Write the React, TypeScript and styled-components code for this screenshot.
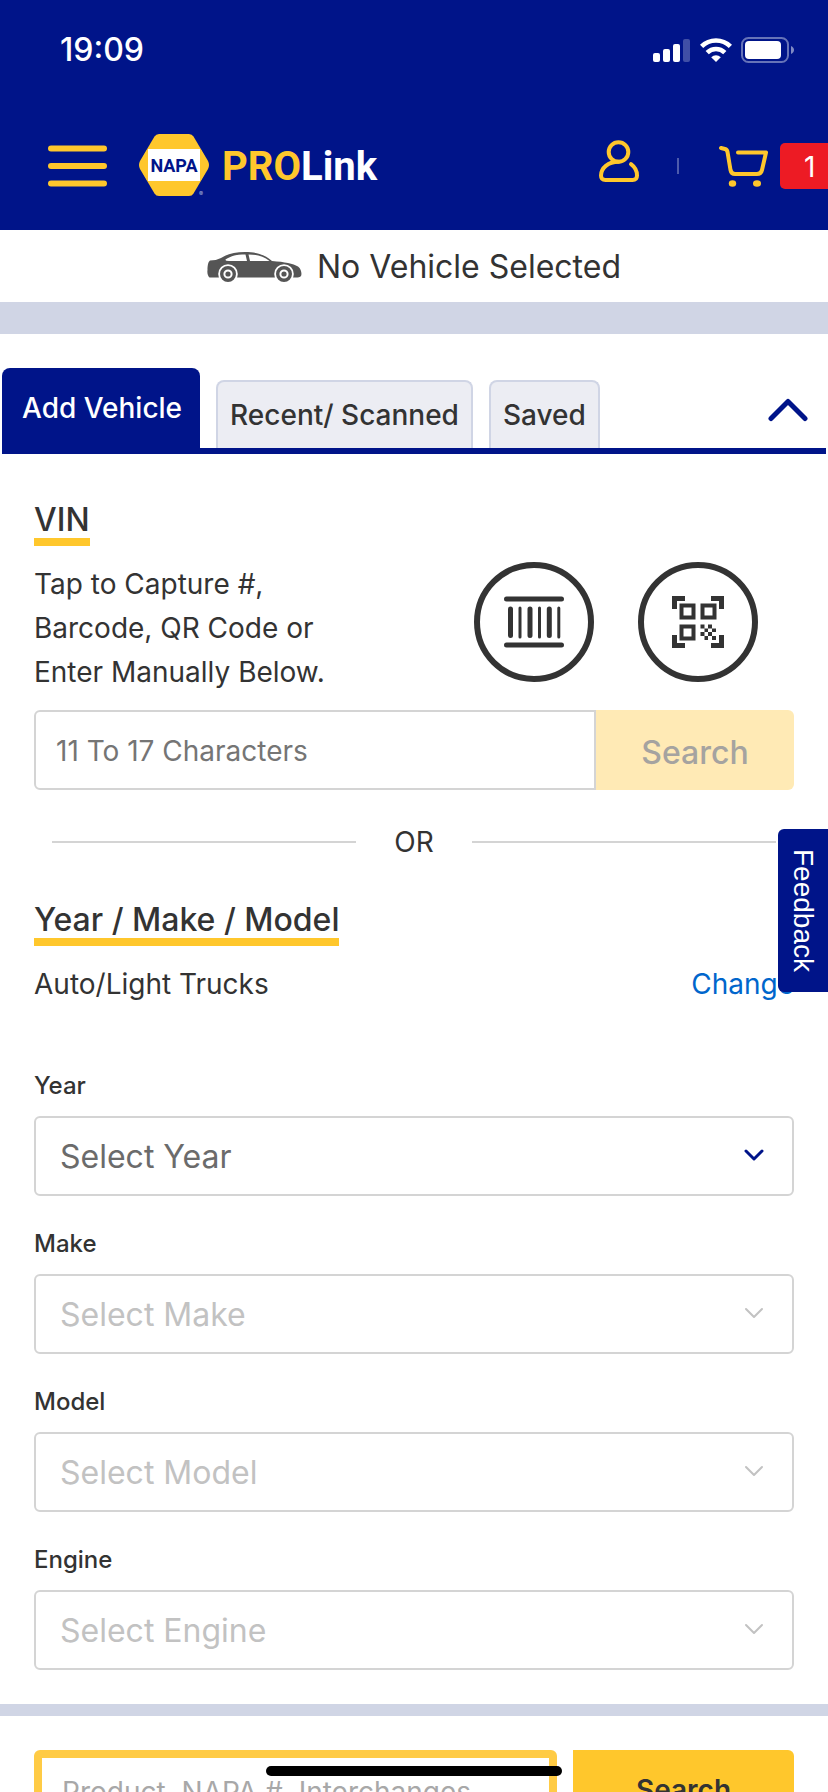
import React, { useState } from "react";
import styled, { createGlobalStyle } from "styled-components";

const navy = "#001489";
const gold = "#ffc72c";
const ink = "#333333";
const mist = "#d0d5e5";
const line = "#d4d4d4";

const GlobalStyle = createGlobalStyle`
  *, *::before, *::after { box-sizing: border-box; }
  html, body { margin: 0; padding: 0; background: #fff; }
  body, button, input, select {
    font-family: Inter, "Liberation Sans", sans-serif;
    color: ${ink};
  }
  button { border: 0; padding: 0; background: none; cursor: pointer; }
  svg { display: block; flex: none; }
`;

const Screen = styled.div`
  position: relative;
  height: 100vh;
  overflow-x: hidden;
  overflow-y: auto;
  scrollbar-width: none;
`;

const TopArea = styled.header`
  background: ${navy};
  color: #fff;
`;

const StatusBar = styled.div`
  display: flex;
  align-items: center;
  justify-content: space-between;
  height: 100px;
  padding: 0 34px 0 60px;
`;

const Clock = styled.time`
  font-size: 32px;
  font-weight: 500;
  line-height: 40px;
`;

const StatusIcons = styled.div`
  display: flex;
  align-items: center;
  gap: 9px;
`;

const NavBar = styled.nav`
  display: flex;
  align-items: center;
  height: 130px;
  padding: 2px 0 0 48px;
`;

const MenuButton = styled.button`
  margin-right: 32px;
`;

const Brand = styled.a`
  display: flex;
  align-items: center;
  text-decoration: none;
`;

const NavActions = styled.div`
  display: flex;
  align-items: center;
  margin-left: auto;
`;

const UserButton = styled.button`
  margin-bottom: 10px;
`;

const NavDivider = styled.span`
  width: 2px;
  height: 16px;
  margin: 0 40px 0 38px;
  background: #4d5bac;
`;

const CartButton = styled.button`
  display: flex;
  align-items: center;
  gap: 12px;
`;

const CartCount = styled.span`
  width: 48px;
  height: 46px;
  padding-left: 24px;
  border-radius: 5px 0 0 5px;
  background: #ed1b24;
  color: #fff;
  font-size: 28px;
  line-height: 48px;
  text-align: left;
`;

const VehicleBar = styled.div`
  display: flex;
  align-items: center;
  justify-content: center;
  gap: 14px;
  height: 72px;
  padding-top: 2px;
  font-size: 32px;
  line-height: 40px;
`;

const Band = styled.div<{ $height: number }>`
  height: ${(p) => p.$height}px;
  background: ${mist};
`;

const TabBar = styled.div`
  display: flex;
  align-items: flex-end;
  gap: 16px;
  margin: 34px 2px 0;
  border-bottom: 6px solid ${navy};
`;

const Tab = styled.button<{ $active: boolean }>`
  height: ${(p) => (p.$active ? 80 : 68)}px;
  padding: ${(p) => (p.$active ? "0 18px 0 20px" : "0 12px")};
  border: ${(p) => (p.$active ? "0" : `2px solid ${mist}`)};
  border-bottom: 0;
  border-radius: 8px 8px 0 0;
  background: ${(p) => (p.$active ? navy : "#ecedf3")};
  color: ${(p) => (p.$active ? "#fff" : ink)};
  font-size: 28px;
  font-weight: 500;
  line-height: 36px;
  white-space: nowrap;
`;

const CollapseButton = styled.button`
  margin: 0 18px 26px auto;
`;

const Panel = styled.main`
  padding: 42px 34px 34px;
`;

const Heading = styled.h2`
  width: fit-content;
  margin: 0;
  padding-top: 6px;
  border-bottom: 8px solid ${gold};
  font-size: 32px;
  font-weight: 500;
  line-height: 36px;
`;

const CaptureRow = styled.div`
  display: flex;
  align-items: center;
  justify-content: space-between;
  margin: 16px 0;
  padding-right: 36px;
`;

const CaptureHint = styled.p`
  margin: 0;
  max-width: 320px;
  font-size: 28px;
  line-height: 44px;
`;

const CaptureButtons = styled.div`
  display: flex;
  gap: 44px;
  padding-bottom: 12px;
`;

const RoundButton = styled.button`
  display: flex;
  align-items: center;
  justify-content: center;
  width: 120px;
  height: 120px;
  border: 6px solid ${ink};
  border-radius: 50%;
`;

const VinForm = styled.form`
  display: flex;
`;

const VinInput = styled.input`
  flex: 1;
  min-width: 0;
  height: 80px;
  padding: 2px 20px 0;
  border: 2px solid ${line};
  border-radius: 6px 0 0 6px;
  font-size: 28px;
  &::placeholder { color: #757575; opacity: 1; }
`;

const VinSearch = styled.button`
  width: 198px;
  height: 80px;
  padding-top: 4px;
  border-radius: 0 6px 6px 0;
  background: #ffeab5;
  color: #a5a3a0;
  font-size: 32px;
  font-weight: 500;
`;

const OrDivider = styled.div`
  display: flex;
  align-items: center;
  gap: 38px;
  margin: 32px 18px 34px;
  font-size: 28px;
  line-height: 40px;
  &::before, &::after {
    content: "";
    flex: 1;
    height: 2px;
    background: ${line};
  }
`;

const TypeRow = styled.div`
  display: flex;
  justify-content: space-between;
  margin: 16px 0 64px;
  font-size: 28px;
  line-height: 44px;
`;

const ChangeLink = styled.a`
  color: #0066cc;
  text-decoration: none;
`;

const Fields = styled.div`
  display: flex;
  flex-direction: column;
  gap: 32px;
`;

const Field = styled.div`
  display: flex;
  flex-direction: column;
  gap: 14px;
`;

const FieldLabel = styled.label`
  font-size: 24px;
  font-weight: 500;
  line-height: 32px;
`;

const SelectWrap = styled.div`
  position: relative;
`;

const Select = styled.select`
  appearance: none;
  display: block;
  width: 100%;
  height: 80px;
  padding: 0 60px 0 24px;
  border: 2px solid ${line};
  border-radius: 6px;
  background: #fff;
  color: #6b6b6b;
  font-size: 32px;
  opacity: 1;
  &:disabled { color: #c2c2c2; }
`;

const SelectArrow = styled.svg`
  position: absolute;
  top: 32px;
  right: 28px;
  pointer-events: none;
`;

const ProductForm = styled.form`
  display: flex;
  gap: 16px;
  padding: 34px;
`;

const ProductInput = styled.input`
  flex: 1;
  min-width: 0;
  height: 80px;
  padding: 4px 20px 0;
  border: 8px solid #ffcb45;
  border-radius: 6px;
  font-size: 28px;
  &::placeholder { color: #a8a8a8; opacity: 1; }
`;

const ProductSearch = styled.button`
  width: 221px;
  height: 80px;
  border-radius: 0 6px 6px 0;
  background: ${gold};
  font-size: 28px;
  font-weight: 600;
`;

const FeedbackTab = styled.button`
  position: fixed;
  top: 829px;
  right: 0;
  width: 50px;
  height: 163px;
  border-radius: 6px 0 0 6px;
  background: ${navy};
  color: #fff;
  font-family: "Liberation Sans", Arial, sans-serif;
  font-size: 28px;
  line-height: 50px;
  writing-mode: vertical-rl;
`;

const HomeIndicator = styled.div`
  position: fixed;
  bottom: 16px;
  left: 50%;
  width: 296px;
  height: 10px;
  margin-left: -148px;
  border-radius: 5px;
  background: #000;
`;

const SignalIcon = () => (
  <svg width="38" height="24" viewBox="0 0 38 24" fill="#fff">
    <rect x="0" y="15" width="7" height="9" rx="2" />
    <rect x="10" y="11" width="7" height="13" rx="2" />
    <rect x="20" y="6" width="7" height="18" rx="2" />
    <rect x="30" y="1" width="7" height="23" rx="2" opacity=".25" />
  </svg>
);

const WifiIcon = () => (
  <svg width="32" height="24" viewBox="0 0 32 24" fill="none" stroke="#fff" strokeWidth="4.6">
    <path d="M1.6 8.4a20.6 20.6 0 0 1 28.8 0" />
    <path d="M7.2 14.6a12.6 12.6 0 0 1 17.6 0" />
    <path d="M16 24l-4.8-4.8a7 7 0 0 1 9.6 0z" fill="#fff" stroke="none" />
  </svg>
);

const BatteryIcon = () => (
  <svg width="53" height="26" viewBox="0 0 53 26">
    <rect x="1" y="1" width="46" height="24" rx="6.5" fill="none" stroke="#6673b8" strokeWidth="2" />
    <rect x="4" y="4" width="36" height="18" rx="4" fill="#fff" />
    <path d="M50 9c4 1.500 4 6.500 0 8z" fill="#7f8ac4" />
  </svg>
);

const MenuIcon = () => (
  <svg width="59" height="42" viewBox="0 0 59 42" stroke={gold} strokeWidth="6" strokeLinecap="round">
    <path d="M3 3.500h53M3 21h53M3 38.500h53" />
  </svg>
);

const BrandLogo = () => (
  <svg width="250" height="64" viewBox="0 0 250 64">
    <path
      d="M20 0h30q3 0 4.500 2.500L69 27q2 4 0 8L54.500 59.500Q53 62 50 62H20q-3 0-4.500-2.500L1 35q-2-4 0-8L15.500 2.500Q17 0 20 0z"
      fill={gold}
    />
    <path d="M9 15h52v32H9z" fill="#fff" />
    <path d="M8.500 15v32l-4-7V22zM61.500 15v32l4-7V22z" fill={gold} />
    <text
      x="35"
      y="38"
      textAnchor="middle"
      fontFamily="Roboto, sans-serif"
      fontSize="18"
      fontWeight="700"
      fill={navy}
    >
      NAPA
    </text>
    <text x="62" y="62" textAnchor="middle" fontFamily="Inter, sans-serif" fontSize="6" fill="#b3b9dc">
      ®
    </text>
    <text x="83" y="46" fontFamily="Roboto, sans-serif" fontSize="40" fontWeight="700" fill="#fff">
      <tspan fill={gold}>PRO</tspan>Link
    </text>
  </svg>
);

const UserIcon = () => (
  <svg width="40" height="42" viewBox="0 0 40 42" fill="none" stroke={gold} strokeWidth="4" strokeLinecap="round">
    <circle cx="19.500" cy="12" r="9.800" />
    <path d="M19.500 21.800C9 21.800 2 28 2 35.500c0 3 1.500 4.500 4.500 4.500h27c3 0 4.500-1.500 4.500-4.500 0-5-2.200-8.500-6-11.300" />
  </svg>
);

const CartIcon = () => (
  <svg width="49" height="42" viewBox="0 0 49 42" fill="none" stroke={gold} strokeWidth="4" strokeLinecap="round" strokeLinejoin="round">
    <path d="M2 3l4 1q2 .5 2.500 3l3 18q.8 4 4.500 4h22q4 0 5-4l4-17.500H19" />
    <ellipse cx="13.500" cy="38.500" rx="3.700" ry="3.300" fill={gold} stroke="none" />
    <ellipse cx="38" cy="38.500" rx="4" ry="3.300" fill={gold} stroke="none" />
  </svg>
);

const CarIcon = () => (
  <svg width="96" height="30" viewBox="0 0 96 30" fill="#555">
    <path d="M3 8.500Q9 8.500 14 6C21 1.500 28 0 38 0c12 0 20 3 27 9 13 1 21 2.500 26 5.500 3.500 2.500 4 8 3 9.500-.8 1.500-3 1.500-5 1.500H2.500C.8 24 0 21 .5 18 .5 14 1 10 3 8.500z" />
    <path d="M18.500 7.500C24 3.800 30 2.500 38.500 2.500L40 9H22q-4 0-3.500-1.500zM41.500 2.500c9 0 15 2 21 6.500H43z" fill="#fff" />
    <circle cx="21" cy="22" r="9.800" fill="#fff" />
    <circle cx="77" cy="22" r="9.800" fill="#fff" />
    <circle cx="21" cy="22" r="6.300" fill="none" stroke="#555" strokeWidth="3.400" />
    <circle cx="77" cy="22" r="6.300" fill="none" stroke="#555" strokeWidth="3.400" />
    <circle cx="21" cy="22" r="2.600" />
    <circle cx="77" cy="22" r="2.600" />
  </svg>
);

const CollapseIcon = () => (
  <svg width="40" height="24" viewBox="0 0 40 24" fill="none" stroke={navy} strokeWidth="5" strokeLinecap="round" strokeLinejoin="round">
    <path d="M3 20.500L20 3.500l17 17" />
  </svg>
);

const BarcodeIcon = () => (
  <svg width="60" height="52" viewBox="0 0 60 52" stroke={ink} strokeLinecap="round">
    <path d="M2.500 3h55M2.500 49h55" strokeWidth="5" />
    <path d="M6.500 13v26.500M26 13v26.500M45.300 13v26.500" strokeWidth="5" />
    <path d="M16 12v29M35.500 12v29M54.800 12v29" strokeWidth="3" />
  </svg>
);

const QrIcon = () => (
  <svg width="52" height="52" viewBox="0 0 52 52" fill={ink}>
    <path d="M0 0h13v5H5v8H0zM39 0h13v13h-5V5h-8zM0 39h5v8h8v5H0zM47 39h5v13H39v-5h8z" />
    <path d="M7.500 7.500h16v16h-16zm4 4v8h8v-8zM28.500 7.500h16v16h-16zm4 4v8h8v-8zM7.500 28.500h16v16h-16zm4 4v8h8v-8z" fillRule="evenodd" />
    <path d="M28.500 28.500h4v4h-4zM36 28.500h4v4h-4zM32.500 32.500h3.500v3.500h-3.500zM40 32.500h4v3.500h-4zM36 36h4v4h-4zM28.500 36h4v4h-4zM32.500 40h3.500v4h-3.500zM40 40h4v4h-4z" />
  </svg>
);

const tabs = ["Add Vehicle", "Recent/ Scanned", "Saved"];
const fields = ["Year", "Make", "Model", "Engine"];

export default function App() {
  const [activeTab, setActiveTab] = useState(tabs[0]);
  return (
    <Screen>
      <GlobalStyle />
      <TopArea>
        <StatusBar>
          <Clock>19:09</Clock>
          <StatusIcons>
            <SignalIcon />
            <WifiIcon />
            <BatteryIcon />
          </StatusIcons>
        </StatusBar>
        <NavBar>
          <MenuButton type="button" aria-label="Menu">
            <MenuIcon />
          </MenuButton>
          <Brand href="#home">
            <BrandLogo />
          </Brand>
          <NavActions>
            <UserButton type="button" aria-label="Account">
              <UserIcon />
            </UserButton>
            <NavDivider />
            <CartButton type="button" aria-label="Cart">
              <CartIcon />
              <CartCount>1</CartCount>
            </CartButton>
          </NavActions>
        </NavBar>
      </TopArea>

      <VehicleBar>
        <CarIcon />
        <span>No Vehicle Selected</span>
      </VehicleBar>
      <Band $height={32} />

      <TabBar role="tablist">
        {tabs.map((tab) => (
          <Tab
            key={tab}
            type="button"
            role="tab"
            aria-selected={tab === activeTab}
            $active={tab === activeTab}
            onClick={() => setActiveTab(tab)}
          >
            {tab}
          </Tab>
        ))}
        <CollapseButton type="button" aria-label="Collapse">
          <CollapseIcon />
        </CollapseButton>
      </TabBar>

      <Panel>
        <Heading>VIN</Heading>
        <CaptureRow>
          <CaptureHint>Tap to Capture #, Barcode, QR Code or Enter Manually Below.</CaptureHint>
          <CaptureButtons>
            <RoundButton type="button" aria-label="Scan barcode">
              <BarcodeIcon />
            </RoundButton>
            <RoundButton type="button" aria-label="Scan QR code">
              <QrIcon />
            </RoundButton>
          </CaptureButtons>
        </CaptureRow>
        <VinForm onSubmit={(e) => e.preventDefault()}>
          <VinInput aria-label="VIN" placeholder="11 To 17 Characters" />
          <VinSearch type="submit" disabled>
            Search
          </VinSearch>
        </VinForm>

        <OrDivider>OR</OrDivider>

        <Heading>Year / Make / Model</Heading>
        <TypeRow>
          <span>Auto/Light Trucks</span>
          <ChangeLink href="#change">Change</ChangeLink>
        </TypeRow>
        <Fields>
          {fields.map((name, i) => (
            <Field key={name}>
              <FieldLabel htmlFor={name}>{name}</FieldLabel>
              <SelectWrap>
                <Select id={name} disabled={i > 0}>
                  <option>Select {name}</option>
                </Select>
                <SelectArrow
                  width="24"
                  height="16"
                  viewBox="0 0 24 16"
                  fill="none"
                  stroke={i === 0 ? navy : "#c2c2c2"}
                  strokeWidth={i === 0 ? 3 : 2}
                  strokeLinecap="round"
                  strokeLinejoin="round"
                >
                  <path d="M4 3l8 8 8-8" />
                </SelectArrow>
              </SelectWrap>
            </Field>
          ))}
        </Fields>
      </Panel>

      <Band $height={12} />
      <ProductForm onSubmit={(e) => e.preventDefault()}>
        <ProductInput aria-label="Product search" placeholder="Product, NAPA #, Interchanges" />
        <ProductSearch type="submit">Search</ProductSearch>
      </ProductForm>

      <FeedbackTab type="button">Feedback</FeedbackTab>
      <HomeIndicator />
    </Screen>
  );
}
